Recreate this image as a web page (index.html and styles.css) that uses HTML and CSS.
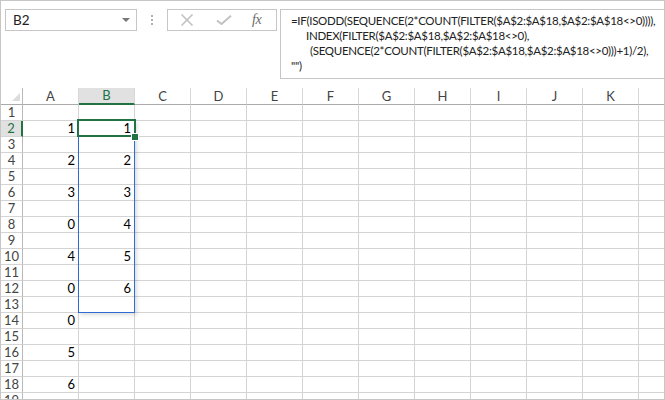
FILE: index.html
```html
<!DOCTYPE html>
<html>
<head>
<meta charset="utf-8">
<link rel="stylesheet" href="styles.css">
</head>
<body>
<div class="app">
  <div class="fbar">
    <div class="namebox">
      <span class="nb-text">B2</span>
      <svg class="nb-arrow" width="8" height="4" viewBox="0 0 8 4"><path d="M0 0H8L4 4Z" fill="#777"/></svg>
    </div>
    <div class="dots"><i></i><i></i><i></i></div>
    <div class="btns">
      <svg class="ico" width="14" height="12" viewBox="0 0 14 12"><path d="M1.5 0.5L12.5 11.5M12.5 0.5L1.5 11.5" stroke="#c2c2c2" stroke-width="1.6" fill="none"/></svg>
      <svg class="ico" width="16" height="10" viewBox="0 0 16 10"><path d="M1 5.5L5.5 9L15 0.8" stroke="#c2c2c2" stroke-width="2" fill="none"/></svg>
      <span class="fx">fx</span>
    </div>
    <div class="formula">=IF(ISODD(SEQUENCE(2*COUNT(FILTER($A$2:$A$18,$A$2:$A$18&lt;&gt;0)))),<br><span class="in1">INDEX(FILTER($A$2:$A$18,$A$2:$A$18&lt;&gt;0),</span><br><span class="in2">(SEQUENCE(2*COUNT(FILTER($A$2:$A$18,$A$2:$A$18&lt;&gt;0)))+1)/2),</span><br>"")</div>
  </div>
  <div class="sheet">
    <div class="row hdr">
      <div class="corner"><svg width="8" height="8" viewBox="0 0 8 8"><path d="M8 0V8H0Z" fill="#dcdcdc"/></svg></div>
      <div class="ch">A</div><div class="ch sel">B</div><div class="ch">C</div><div class="ch">D</div><div class="ch">E</div><div class="ch">F</div><div class="ch">G</div><div class="ch">H</div><div class="ch">I</div><div class="ch">J</div><div class="ch">K</div><div class="ch last"></div>
    </div>
    <div class="row"><div class="rh">1</div><div class="c"></div><div class="c"></div><div class="c"></div><div class="c"></div><div class="c"></div><div class="c"></div><div class="c"></div><div class="c"></div><div class="c"></div><div class="c"></div><div class="c"></div><div class="c last"></div></div>
    <div class="row"><div class="rh sel">2</div><div class="c">1</div><div class="c">1</div><div class="c"></div><div class="c"></div><div class="c"></div><div class="c"></div><div class="c"></div><div class="c"></div><div class="c"></div><div class="c"></div><div class="c"></div><div class="c last"></div></div>
    <div class="row"><div class="rh">3</div><div class="c"></div><div class="c"></div><div class="c"></div><div class="c"></div><div class="c"></div><div class="c"></div><div class="c"></div><div class="c"></div><div class="c"></div><div class="c"></div><div class="c"></div><div class="c last"></div></div>
    <div class="row"><div class="rh">4</div><div class="c">2</div><div class="c">2</div><div class="c"></div><div class="c"></div><div class="c"></div><div class="c"></div><div class="c"></div><div class="c"></div><div class="c"></div><div class="c"></div><div class="c"></div><div class="c last"></div></div>
    <div class="row"><div class="rh">5</div><div class="c"></div><div class="c"></div><div class="c"></div><div class="c"></div><div class="c"></div><div class="c"></div><div class="c"></div><div class="c"></div><div class="c"></div><div class="c"></div><div class="c"></div><div class="c last"></div></div>
    <div class="row"><div class="rh">6</div><div class="c">3</div><div class="c">3</div><div class="c"></div><div class="c"></div><div class="c"></div><div class="c"></div><div class="c"></div><div class="c"></div><div class="c"></div><div class="c"></div><div class="c"></div><div class="c last"></div></div>
    <div class="row"><div class="rh">7</div><div class="c"></div><div class="c"></div><div class="c"></div><div class="c"></div><div class="c"></div><div class="c"></div><div class="c"></div><div class="c"></div><div class="c"></div><div class="c"></div><div class="c"></div><div class="c last"></div></div>
    <div class="row"><div class="rh">8</div><div class="c">0</div><div class="c">4</div><div class="c"></div><div class="c"></div><div class="c"></div><div class="c"></div><div class="c"></div><div class="c"></div><div class="c"></div><div class="c"></div><div class="c"></div><div class="c last"></div></div>
    <div class="row"><div class="rh">9</div><div class="c"></div><div class="c"></div><div class="c"></div><div class="c"></div><div class="c"></div><div class="c"></div><div class="c"></div><div class="c"></div><div class="c"></div><div class="c"></div><div class="c"></div><div class="c last"></div></div>
    <div class="row"><div class="rh">10</div><div class="c">4</div><div class="c">5</div><div class="c"></div><div class="c"></div><div class="c"></div><div class="c"></div><div class="c"></div><div class="c"></div><div class="c"></div><div class="c"></div><div class="c"></div><div class="c last"></div></div>
    <div class="row"><div class="rh">11</div><div class="c"></div><div class="c"></div><div class="c"></div><div class="c"></div><div class="c"></div><div class="c"></div><div class="c"></div><div class="c"></div><div class="c"></div><div class="c"></div><div class="c"></div><div class="c last"></div></div>
    <div class="row"><div class="rh">12</div><div class="c">0</div><div class="c">6</div><div class="c"></div><div class="c"></div><div class="c"></div><div class="c"></div><div class="c"></div><div class="c"></div><div class="c"></div><div class="c"></div><div class="c"></div><div class="c last"></div></div>
    <div class="row"><div class="rh">13</div><div class="c"></div><div class="c"></div><div class="c"></div><div class="c"></div><div class="c"></div><div class="c"></div><div class="c"></div><div class="c"></div><div class="c"></div><div class="c"></div><div class="c"></div><div class="c last"></div></div>
    <div class="row"><div class="rh">14</div><div class="c">0</div><div class="c"></div><div class="c"></div><div class="c"></div><div class="c"></div><div class="c"></div><div class="c"></div><div class="c"></div><div class="c"></div><div class="c"></div><div class="c"></div><div class="c last"></div></div>
    <div class="row"><div class="rh">15</div><div class="c"></div><div class="c"></div><div class="c"></div><div class="c"></div><div class="c"></div><div class="c"></div><div class="c"></div><div class="c"></div><div class="c"></div><div class="c"></div><div class="c"></div><div class="c last"></div></div>
    <div class="row"><div class="rh">16</div><div class="c">5</div><div class="c"></div><div class="c"></div><div class="c"></div><div class="c"></div><div class="c"></div><div class="c"></div><div class="c"></div><div class="c"></div><div class="c"></div><div class="c"></div><div class="c last"></div></div>
    <div class="row"><div class="rh">17</div><div class="c"></div><div class="c"></div><div class="c"></div><div class="c"></div><div class="c"></div><div class="c"></div><div class="c"></div><div class="c"></div><div class="c"></div><div class="c"></div><div class="c"></div><div class="c last"></div></div>
    <div class="row"><div class="rh">18</div><div class="c">6</div><div class="c"></div><div class="c"></div><div class="c"></div><div class="c"></div><div class="c"></div><div class="c"></div><div class="c"></div><div class="c"></div><div class="c"></div><div class="c"></div><div class="c last"></div></div>
    <div class="row"><div class="rh">19</div><div class="c"></div><div class="c"></div><div class="c"></div><div class="c"></div><div class="c"></div><div class="c"></div><div class="c"></div><div class="c"></div><div class="c"></div><div class="c"></div><div class="c"></div><div class="c last"></div></div>
    <div class="spill"></div>
    <div class="active"><span class="handle"></span></div>
  </div>
</div>
</body>
</html>
```
FILE: styles.css
```css
* { box-sizing: border-box; }
html, body { margin: 0; padding: 0; background: #fff; }
.app {
  width: 665px; height: 400px;
  border: 1px solid #c6c6c6;
  overflow: hidden;
  font-family: Lato, "Open Sans", sans-serif;
  color: #000;
  background: #fff;
}
.fbar {
  height: 87px;
  display: flex;
  align-items: flex-start;
  padding: 8px 0 0 4px;
}
.namebox {
  flex: none;
  width: 132px; height: 22px;
  border: 1px solid #c6c6c6;
  display: flex; align-items: center; justify-content: space-between;
  padding: 0 6px 0 7px;
  font-size: 13.5px; color: #222;
}
.nb-arrow { display: block; }
.dots {
  flex: none;
  width: 30px; height: 22px;
  display: flex; flex-direction: column; align-items: center; justify-content: center;
  gap: 2px;
}
.dots i { display: block; width: 2px; height: 2px; background: #b0b0b0; }
.btns {
  flex: none;
  width: 110px; height: 22px;
  border: 1px solid #c6c6c6;
  display: flex; align-items: center;
  padding: 0 0 0 12px;
  gap: 22px;
}
.ico { display: block; }
.fx {
  font-family: "Liberation Serif", serif;
  font-style: italic;
  font-size: 14px;
  color: #6a6a6a;
  margin-left: -2px;
  letter-spacing: -0.5px;
}
.formula {
  margin-left: 3px;
  flex: 1;
  min-width: 0;
  height: 70px;
  border: 1px solid #c6c6c6;
  border-right: none;
  padding: 3px 0 0 10px;
  font-size: 11.5px;
  letter-spacing: -0.3px;
  line-height: 15px;
  color: #222;
  white-space: nowrap;
  overflow: hidden;
}
.in1 { padding-left: 15px; }
.in2 { padding-left: 19px; }
.sheet {
  position: relative;
  height: 311px;
  overflow: hidden;
  font-size: 13px;
}
.row { display: flex; height: 16px; }
.row.hdr { height: 17px; }
.corner, .rh {
  flex: none; width: 22px;
  border-right: 1px solid #b9b9b9;
  border-bottom: 1px solid #d4d4d4;
}
.corner {
  border-bottom: 1px solid #ababab;
  display: flex; align-items: flex-end; justify-content: flex-end;
  padding: 0 2px 3px 0;
}
.corner svg { display: block; }
.rh {
  text-align: center; line-height: 15px; color: #444;
}
.rh.sel { background: #e1e1e1; color: #217346; border-right: 2px solid #217346; }
.ch {
  flex: none; width: 56px;
  border-bottom: 1px solid #ababab;
  border-right: 1px solid #d8d8d8;
  text-align: center; line-height: 16px; color: #444;
}
.ch.sel { background: #e1e1e1; color: #217346; border-bottom: 2px solid #217346; line-height: 15px; }
.c {
  flex: none; width: 56px;
  border-right: 1px solid #d4d4d4;
  border-bottom: 1px solid #d4d4d4;
  text-align: right;
  padding-right: 3px;
  line-height: 15px;
}
.last { flex: 1; width: auto; border-right: none; }
.spill {
  position: absolute;
  left: 77px; top: 32px;
  width: 57px; height: 193px;
  border: 1px solid #2e6bd2;
  box-shadow: 2px 2px 4px rgba(0,0,0,0.14);
}
.active {
  position: absolute;
  left: 76px; top: 31px;
  width: 59px; height: 18px;
  border: 2px solid #217346;
}
.handle {
  position: absolute;
  right: -4px; bottom: -5px;
  width: 6px; height: 6px;
  background: #217346;
  border: 1px solid #fff;
  box-sizing: content-box;
  margin: -1px;
}
```
